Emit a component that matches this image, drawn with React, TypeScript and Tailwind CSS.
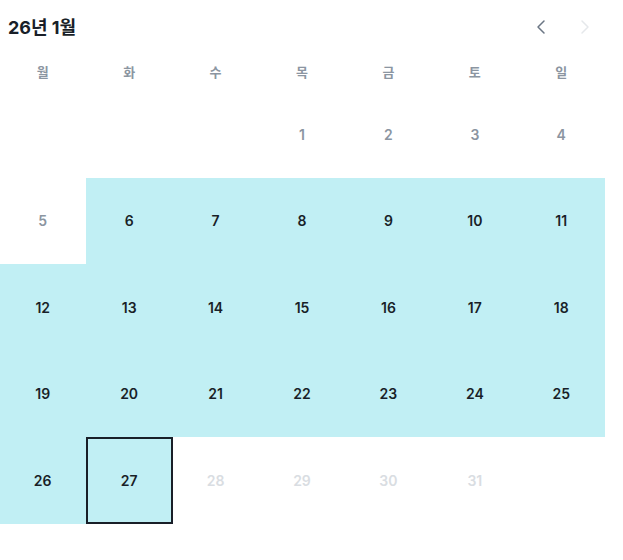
import { ChevronLeft, ChevronRight } from 'lucide-react';

const WEEKDAYS = ['월', '화', '수', '목', '금', '토', '일'];

type Cell = { day: number | null; kind: 'past' | 'range' | 'future' | 'empty'; selected?: boolean };

function buildCells(): Cell[] {
  const cells: Cell[] = [];
  // Jan 2026 starts on Thursday (Mon-first index 3)
  for (let i = 0; i < 3; i++) cells.push({ day: null, kind: 'empty' });
  for (let d = 1; d <= 31; d++) {
    let kind: Cell['kind'] = 'range';
    if (d <= 5) kind = 'past';
    else if (d > 27) kind = 'future';
    cells.push({ day: d, kind, selected: d === 27 });
  }
  while (cells.length % 7 !== 0) cells.push({ day: null, kind: 'empty' });
  return cells;
}

export default function App() {
  const cells = buildCells();

  return (
    <div
      className="w-[605px] bg-white"
      style={{ fontFamily: 'Inter, "Noto Sans CJK KR", sans-serif' }}
    >
      <div className="flex h-[54px] items-center justify-between pl-2 pr-[8px]">
        <h2 className="text-[18px] font-bold text-[#191f28]">26년 1월</h2>
        <div className="flex items-center gap-[20px]">
          <button className="flex h-6 w-6 items-center justify-center text-[#6b7684]">
            <ChevronLeft size={24} strokeWidth={1.5} />
          </button>
          <button className="flex h-6 w-6 items-center justify-center text-[#e5e8eb]">
            <ChevronRight size={24} strokeWidth={1.5} />
          </button>
        </div>
      </div>

      <div className="grid h-[37px] grid-cols-7 items-center">
        {WEEKDAYS.map((w) => (
          <div key={w} className="pr-px text-center text-[13px] font-semibold text-[#8b95a1]">
            {w}
          </div>
        ))}
      </div>

      <div className="grid grid-cols-7 auto-rows-[86.5px]">
        {cells.map((c, i) => (
          <div
            key={i}
            className={`flex items-center justify-center pr-px text-[14px] font-semibold ${
              c.kind === 'range' ? 'bg-[#c1eff4] text-[#191f28]' : ''
            } ${c.kind === 'past' ? 'text-[#8b95a1]' : ''} ${
              c.kind === 'future' ? 'text-[#d9dde2]' : ''
            } ${c.selected ? 'border-2 border-[#191f28]' : ''}`}
          >
            {c.day ?? ''}
          </div>
        ))}
      </div>
    </div>
  );
}
